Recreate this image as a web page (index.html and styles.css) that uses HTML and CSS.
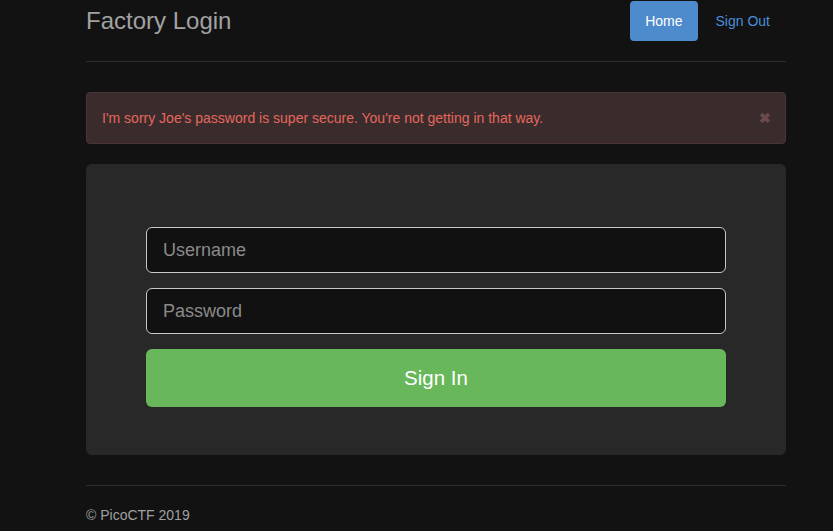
FILE: index.html
```html
<!DOCTYPE html>
<html>
<head>
<meta charset="utf-8">
<link rel="stylesheet" href="styles.css">
</head>
<body>
<div class="container">
  <header class="header">
    <h3 class="brand">Factory Login</h3>
    <nav class="nav">
      <a class="nav-link active" href="#">Home</a>
      <a class="nav-link" href="#">Sign Out</a>
    </nav>
  </header>
  <div class="alert">
    <span>I'm sorry Joe's password is super secure. You're not getting in that way.</span>
    <span class="close">&#x2716;</span>
  </div>
  <div class="panel">
    <form class="form">
      <input class="field" type="text" placeholder="Username">
      <input class="field" type="password" placeholder="Password">
      <button class="btn" type="button">Sign In</button>
    </form>
  </div>
  <footer class="footer">
    <p>&copy; PicoCTF 2019</p>
  </footer>
</div>
</body>
</html>
```
FILE: styles.css
```css
html, body {
  margin: 0;
  padding: 0;
  background: #121212;
  font-family: "Liberation Sans", Arial, sans-serif;
  font-size: 14px;
}
.container {
  width: 700px;
  margin-left: 86px;
}
.header {
  display: flex;
  justify-content: space-between;
  align-items: flex-start;
  height: 61px;
  border-bottom: 1px solid #2c2c2c;
}
.brand {
  margin: 7px 0 0 0;
  font-size: 24px;
  font-weight: normal;
  color: #a2a2a2;
  line-height: 28px;
}
.nav {
  display: flex;
  gap: 2px;
  margin-top: 1px;
  margin-right: 0;
}
.nav-link {
  display: block;
  height: 40px;
  line-height: 41px;
  padding: 0 16px 0 16px;
  color: #4a8fdc;
  text-decoration: none;
  border-radius: 4px;
  font-size: 14px;
}
.nav-link.active {
  background: #4d8bcc;
  color: #ffffff;
  padding: 0 15px;
  line-height: 40px;
}
.alert {
  margin-top: 30px;
  height: 50px;
  display: flex;
  align-items: center;
  justify-content: space-between;
  padding: 0 14px 0 15px;
  background: #3a2c2d;
  border: 1px solid #4b3437;
  border-radius: 4px;
  color: #e5675c;
  font-size: 14px;
}
.close {
  color: #6b4b4b;
  font-size: 14px;
  font-weight: bold;
}
.panel {
  margin-top: 20px;
  height: 291px;
  background: #282828;
  border-radius: 6px;
  display: flex;
  justify-content: center;
}
.form {
  width: 580px;
  margin-top: 63px;
  display: flex;
  flex-direction: column;
}
.field {
  box-sizing: border-box;
  height: 46px;
  margin: 0 0 15px 0;
  padding: 0 16px;
  background: #111111;
  border: 1px solid #c8c8c8;
  border-radius: 6px;
  color: #dddddd;
  font-family: "Liberation Sans", Arial, sans-serif;
  font-size: 18px;
  outline: none;
}
.field::placeholder {
  color: #8a8a8a;
}
.btn {
  height: 58px;
  margin-top: 0;
  background: #68b75a;
  border: none;
  border-radius: 6px;
  color: #ffffff;
  font-family: "Liberation Sans", Arial, sans-serif;
  font-size: 20.5px;
}
.footer {
  margin-top: 30px;
  border-top: 1px solid #2c2c2c;
}
.footer p {
  margin: 21px 0 0 0;
  color: #a0a0a0;
  font-size: 14px;
}
```
